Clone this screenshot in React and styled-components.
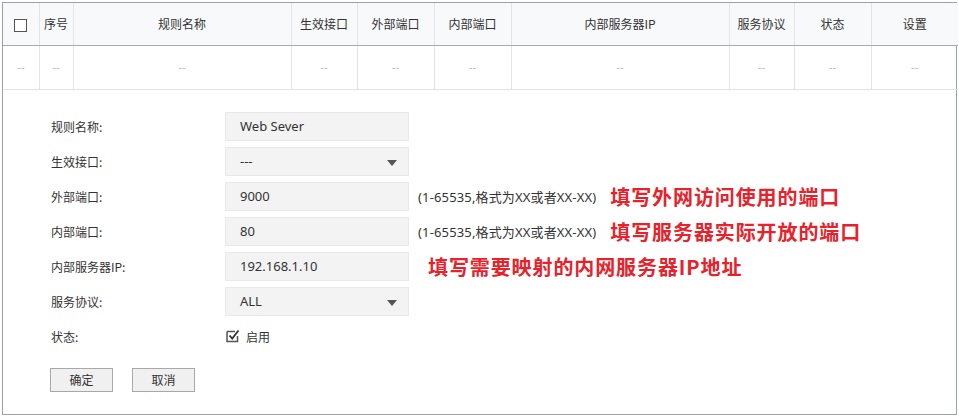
import React from "react";
import styled, { createGlobalStyle } from "styled-components";

const Global = createGlobalStyle`
  html, body { margin: 0; padding: 0; background: #fff; }
  body { font-family: "Noto Sans CJK SC", "Noto Sans", sans-serif; color: #333; }
  * { box-sizing: border-box; }
`;

const Panel = styled.div`
  margin: 2px 0 0 2px;
  width: 955px;
  height: 413px;
  border: 1px solid #9aa3ab;
  background: #fff;
`;

const Table = styled.table`
  width: 100%;
  border-collapse: collapse;
  table-layout: fixed;
  font-size: 12px;
`;

const Th = styled.th`
  height: 42px;
  padding: 0;
  font-weight: normal;
  color: #333;
  background: #f8f9fb;
  border-right: 1px solid #e1e4e8;
  border-bottom: 1px solid #a3abb3;
  text-align: center;
  &:last-child { border-right: none; }
`;

const Td = styled.td`
  height: 44px;
  padding: 0;
  text-align: center;
  color: #b5b5b5;
  font-size: 11px;
  border-right: 1px solid #e1e4e8;
  border-bottom: 1px solid #dfe2e6;
  &:last-child { border-right: none; }
`;

const HeadBox = styled.span`
  display: inline-block;
  width: 13px;
  height: 13px;
  border: 1.5px solid #555;
  vertical-align: middle;
  background: #fff;
`;

const Form = styled.div`
  padding: 22px 0 0 48px;
  display: flex;
  flex-direction: column;
  gap: 6px;
`;

const Row = styled.div`
  display: flex;
  align-items: center;
  height: 29px;
`;

const Label = styled.div`
  width: 174px;
  font-size: 12px;
  color: #333;
`;

const Field = styled.div`
  position: relative;
  width: 184px;
  height: 29px;
  background: #f3f3f3;
  border: 1px solid #e9e9e9;
  padding-left: 14px;
  display: flex;
  align-items: center;
  font-size: 13px;
  color: #333;
  font-family: "Noto Sans", "Noto Sans CJK SC", sans-serif;
`;

const Arrow = styled.span`
  position: absolute;
  right: 11px;
  top: 12px;
  width: 0;
  height: 0;
  border-left: 5px solid transparent;
  border-right: 5px solid transparent;
  border-top: 6px solid #555;
`;

const Hint = styled.div`
  margin-left: 9px;
  font-size: 13px;
  letter-spacing: 0.15px;
  color: #333;
  white-space: nowrap;
  font-family: "Noto Sans", "Noto Sans CJK SC", sans-serif;
`;

const Note = styled.div`
  margin-left: ${(p) => p.$gap}px;
  font-size: 20px;
  font-weight: bold;
  letter-spacing: 0.9px;
  color: #e8222b;
  white-space: nowrap;
  font-family: "Noto Sans CJK SC", sans-serif;
`;

const Check = styled.label`
  display: flex;
  align-items: center;
  gap: 6px;
  font-size: 12px;
  color: #333;
  margin-left: 1px;
`;

const Buttons = styled.div`
  display: flex;
  gap: 19px;
  margin-top: 11px;
  margin-left: -1px;
`;

const Button = styled.button`
  width: 63px;
  height: 24px;
  background: #f0f0f0;
  border: 1px solid #a8a8a8;
  font-size: 12px;
  color: #333;
  font-family: "Noto Sans CJK SC", sans-serif;
  padding: 0;
`;

const cols = [36, 34, 218, 66, 77, 77, 218, 65, 77, 87];
const heads = ["", "序号", "规则名称", "生效接口", "外部端口", "内部端口", "内部服务器IP", "服务协议", "状态", "设置"];

export default function App() {
  return (
    <>
      <Global />
      <Panel>
        <Table>
          <colgroup>
            {cols.map((w, i) => (
              <col key={i} style={{ width: w }} />
            ))}
          </colgroup>
          <thead>
            <tr>
              {heads.map((h, i) => (
                <Th key={i}>{i === 0 ? <HeadBox /> : h}</Th>
              ))}
            </tr>
          </thead>
          <tbody>
            <tr>
              {heads.map((_, i) => (
                <Td key={i}>--</Td>
              ))}
            </tr>
          </tbody>
        </Table>
        <Form>
          <Row>
            <Label>规则名称:</Label>
            <Field>Web Sever</Field>
          </Row>
          <Row>
            <Label>生效接口:</Label>
            <Field>
              ---
              <Arrow />
            </Field>
          </Row>
          <Row>
            <Label>外部端口:</Label>
            <Field>9000</Field>
            <Hint>(1-65535,格式为XX或者XX-XX)</Hint>
            <Note $gap={14}>填写外网访问使用的端口</Note>
          </Row>
          <Row>
            <Label>内部端口:</Label>
            <Field>80</Field>
            <Hint>(1-65535,格式为XX或者XX-XX)</Hint>
            <Note $gap={14}>填写服务器实际开放的端口</Note>
          </Row>
          <Row>
            <Label>内部服务器IP:</Label>
            <Field>192.168.1.10</Field>
            <Note $gap={19}>填写需要映射的内网服务器IP地址</Note>
          </Row>
          <Row>
            <Label>服务协议:</Label>
            <Field>
              ALL
              <Arrow />
            </Field>
          </Row>
          <Row>
            <Label>状态:</Label>
            <Check>
              <svg width="14" height="14" viewBox="0 0 14 14">
                <path d="M1 2.5 H9 M1 2.5 V12.5 H11.5 V7" fill="none" stroke="#555" strokeWidth="1.5" />
                <path d="M3.5 6.5 L6.2 9.5 L12.5 1.5" fill="none" stroke="#333" strokeWidth="1.8" />
              </svg>
              启用
            </Check>
          </Row>
          <Buttons>
            <Button>确定</Button>
            <Button>取消</Button>
          </Buttons>
        </Form>
      </Panel>
    </>
  );
}
